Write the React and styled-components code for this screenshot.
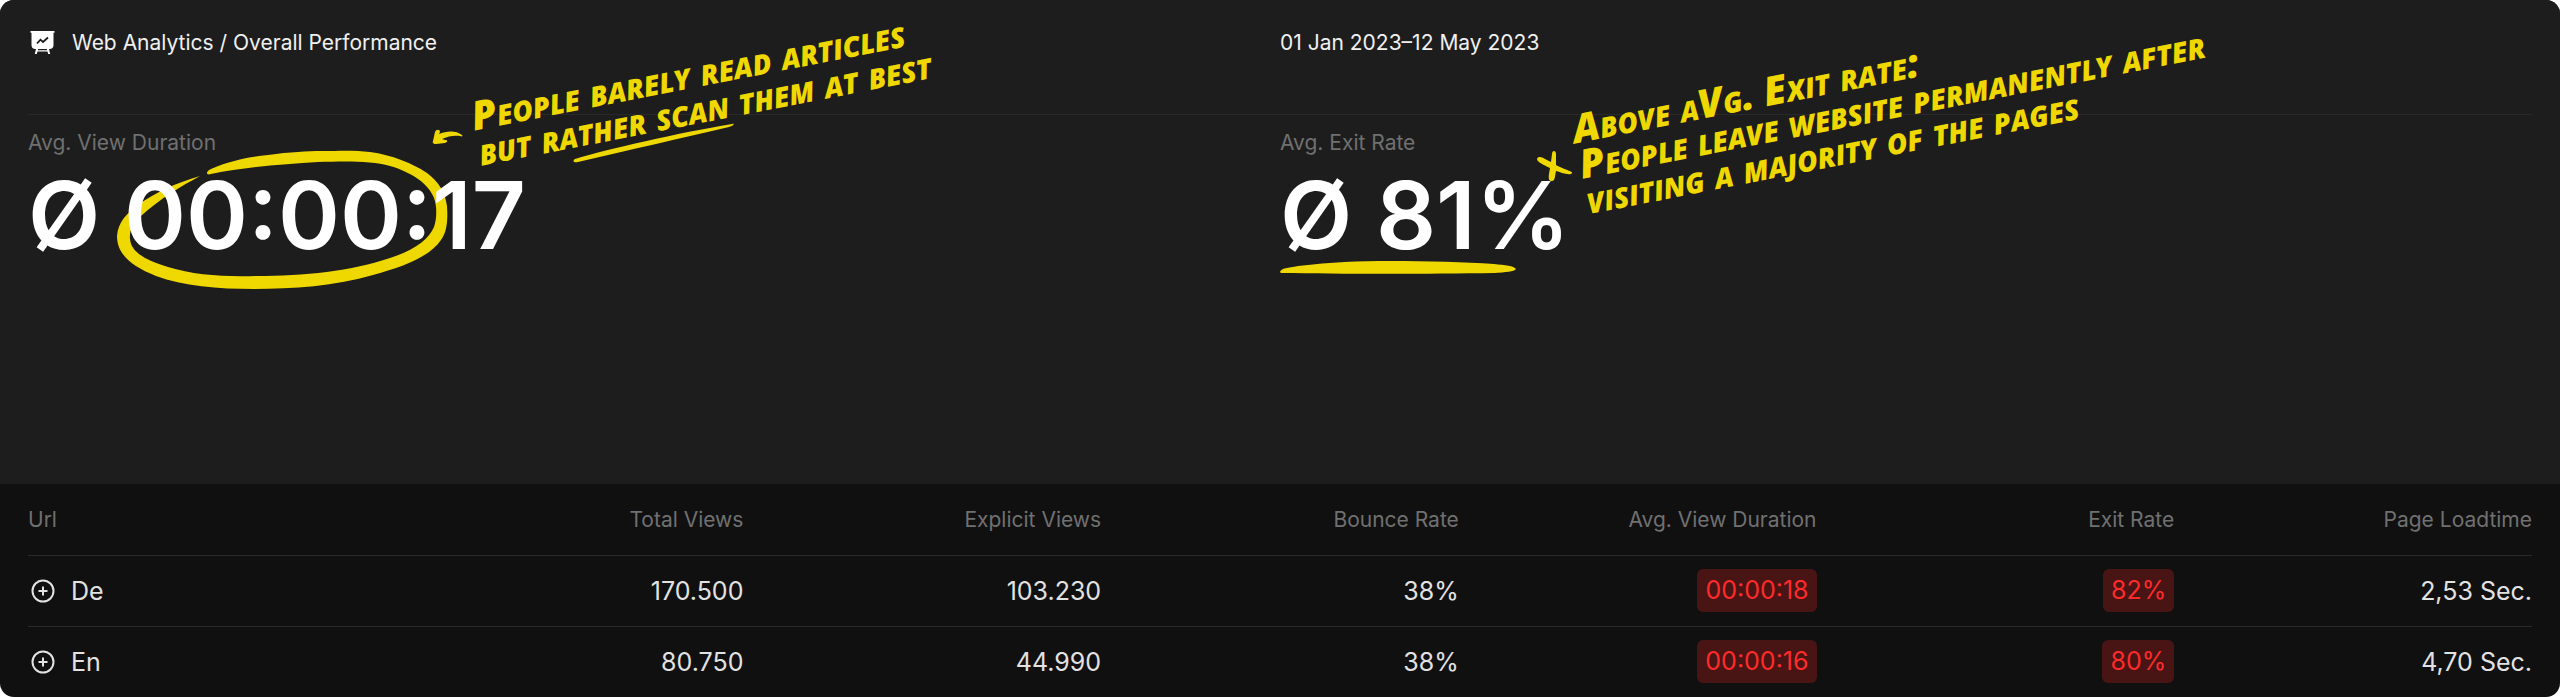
import React from 'react';
import styled, { createGlobalStyle } from 'styled-components';

const columns = ['Url', 'Total Views', 'Explicit Views', 'Bounce Rate', 'Avg. View Duration', 'Exit Rate', 'Page Loadtime'];

const rows = [
    { url: 'De', total: '170.500', explicit: '103.230', bounce: '38%', duration: '00:00:18', exit: '82%', load: '2,53 Sec.' },
    { url: 'En', total: '80.750', explicit: '44.990', bounce: '38%', duration: '00:00:16', exit: '80%', load: '4,70 Sec.' },
];

const BoardIcon = () => (
    <svg width="26" height="24" viewBox="0 0 26 24" aria-hidden="true">
        <path d="M.5 0h24v1.800h-1V14a4 4 0 0 1-4 4h-.5l1.200 5h-2l-.7-2.500H7.500L6.800 23h-2L6 18h-.5a4 4 0 0 1-4-4V1.800h-1zM8.200 18l-.3 1.200h9.200l-.3-1.200z" fill="#fff" />
        <path d="M7 12.500l3.500-3.800 2.500 2.300 5-4.500" fill="none" stroke="#1d1d1d" strokeWidth="1.800" />
    </svg>
);

const PlusIcon = () => (
    <svg width="24" height="24" viewBox="0 0 24 24" fill="none" stroke="#e2e2e2" strokeWidth="2" aria-hidden="true">
        <circle cx="12" cy="12" r="10.500" />
        <path d="M12 7.500v9M7.500 12h9" />
    </svg>
);

const App = () => {
    return (
        <Report>
            <GlobalStyle />
            <Overview>
                <TopBar>
                    <Title>
                        <BoardIcon />
                        Web Analytics / Overall Performance
                    </Title>
                    <Period>01 Jan 2023–12 May 2023</Period>
                </TopBar>
                <Metrics>
                    <Metric>
                        <Marker width="460" height="180" viewBox="0 0 460 180" aria-hidden="true">
                            <path d="M179 58C179 56 181 55 183 54C204 45 222 42 240 40C262 37 280 36 293 36C312 36 326 35 342 37C364 40 384 48 399 58C411 67 417 77 419 91C420 105 419 117 413 125C402 141 378 151 345 160C308 171 264 174 226 174C190 174 155 171 128 161C103 151 89 139 89 121C90 107 99 98 110 90C128 77 148 68 172 61C152 72 133 83 113 101C106 107 101 115 102 124C103 137 117 145 140 152C166 160 196 162 228 161C276 161 324 156 362 143C387 135 401 124 406 112C409 103 409 91 406 83C401 70 386 58 362 51C344 46 321 46 290 47C256 49 218 52 183 59C180 60 179 59 179 58Z" />
                        </Marker>
                        <Label>Avg. View Duration</Label>
                        <Value>Ø 00:00:17</Value>
                        <Marker $front width="800" height="180" viewBox="0 0 800 180" aria-hidden="true">
                            <path d="M434 20C428 15 418 16 411 19L412 17C412 14 408 14 407 17L405 26C404 29 406 29 408 29L417 28C420 27 420 25 417 25L414 24C420 21 427 20 432 21C434 22 435 21 434 20Z" />
                            <path d="M547 44C580 34 650 18 704 9C707 8 706 11 701 12C653 23 602 35 550 47C546 48 544 46 547 44Z" />
                        </Marker>
                        <Note $left={440} $top={-17}>
                            People barely read articles
                            <br />
                            but rather scan them at best
                        </Note>
                    </Metric>
                    <Metric>
                        <Marker width="300" height="180" viewBox="0 0 300 180" aria-hidden="true">
                            <path d="M0 157C1 153 8 153 18 151C52 147 78 146 110 146C148 146 185 147 214 149C225 150 234 151 236 154C234 157 226 157 214 158C150 159 60 159 1 158Z" />
                        </Marker>
                        <Label>Avg. Exit Rate</Label>
                        <Value>Ø 81%</Value>
                        <Marker $front width="320" height="180" viewBox="0 0 320 180" aria-hidden="true">
                            <path d="M257 44C258 41 262 42 265 44L271 47L272 39C272 35 276 35 276 39L276 50C285 55 296 57 291 59C286 60 280 57 276 56C275 61 275 66 272 66C267 67 269 59 270 53C264 50 257 47 257 44Z" />
                        </Marker>
                        <Note $left={289} $top={-4}>
                            Above aVg. Exit rate:
                            <br />
                            People leave website permanently after
                            <br />
                            visiting a majority of the pages
                        </Note>
                    </Metric>
                </Metrics>
            </Overview>
            <TableArea>
                <Table>
                    <thead>
                        <tr>
                            {columns.map((column) => (
                                <HeadCell key={column} scope="col">{column}</HeadCell>
                            ))}
                        </tr>
                    </thead>
                    <tbody>
                        {rows.map((row) => (
                            <tr key={row.url}>
                                <Cell>
                                    <UrlCell>
                                        <ExpandButton aria-label={`Expand ${row.url}`}>
                                            <PlusIcon />
                                        </ExpandButton>
                                        {row.url}
                                    </UrlCell>
                                </Cell>
                                <Cell>{row.total}</Cell>
                                <Cell>{row.explicit}</Cell>
                                <Cell>{row.bounce}</Cell>
                                <Cell><Alert>{row.duration}</Alert></Cell>
                                <Cell><Alert>{row.exit}</Alert></Cell>
                                <Cell>{row.load}</Cell>
                            </tr>
                        ))}
                    </tbody>
                </Table>
            </TableArea>
        </Report>
    );
};

export default App;

// Styled components
const GlobalStyle = createGlobalStyle`
    * {
        box-sizing: border-box;
    }

    body {
        margin: 0;
        background: #fff;
        font-family: Inter, sans-serif;
    }
`;

const Report = styled.main`
    overflow: hidden;
    border-radius: 14px;
    background: #101010;
`;

const Overview = styled.section`
    padding: 0 28px 215px;
    background: #1d1d1d;
`;

const TopBar = styled.header`
    display: grid;
    grid-template-columns: 1fr 1fr;
    padding: 29px 0 57px;
    border-bottom: 1px solid #292929;
    color: #f0f0f0;
    font-size: 21px;
    line-height: 28px;
`;

const Title = styled.h1`
    display: flex;
    align-items: center;
    gap: 16px;
    margin: 0;
    padding-left: 2px;
    font-size: 21px;
    font-weight: 400;
`;

const Period = styled.div`
    font-size: 21px;
`;

const Metrics = styled.div`
    display: grid;
    grid-template-columns: 1fr 1fr;
`;

const Metric = styled.div`
    position: relative;
    padding-top: 14px;
`;

const Label = styled.div`
    color: #707070;
    font-size: 21px;
    line-height: 28px;
`;

const Value = styled.div`
    position: relative;
    padding-top: 4px;
    color: #fff;
    font-size: 94px;
    font-weight: 600;
    line-height: 108px;
    white-space: nowrap;
`;

// hand-drawn strokes, drawn behind the value unless $front is set
const Marker = styled.svg`
    position: absolute;
    top: 0;
    left: 0;
    z-index: ${({ $front }) => ($front ? 1 : 0)};
    overflow: visible;
    fill: #efd700;
    pointer-events: none;
`;

const Note = styled.p`
    position: absolute;
    top: ${({ $top }) => $top}px;
    left: ${({ $left }) => $left}px;
    z-index: 1;
    margin: 0;
    color: #efd700;
    font-family: 'Open Sans', sans-serif;
    font-size: 40px;
    font-style: italic;
    font-weight: 800;
    font-variant: small-caps;
    line-height: 36px;
    white-space: nowrap;
    transform: rotate(-11deg);
    transform-origin: left top;
`;

const TableArea = styled.section`
    padding: 0 28px;
`;

const Table = styled.table`
    width: 100%;
    border-collapse: collapse;
    table-layout: fixed;
`;

const HeadCell = styled.th`
    height: 71px;
    padding: 0;
    color: #707070;
    font-size: 21px;
    font-weight: 400;
    text-align: right;

    &:first-child {
        text-align: left;
    }
`;

const Cell = styled.td`
    height: 71px;
    padding: 0;
    border-top: 1px solid #292929;
    color: #e2e2e2;
    font-size: 25px;
    text-align: right;
`;

const UrlCell = styled.div`
    display: flex;
    align-items: center;
    gap: 16px;
    padding-left: 3px;
`;

const ExpandButton = styled.button`
    display: flex;
    padding: 0;
    border: 0;
    background: none;
    cursor: pointer;
`;

const Alert = styled.span`
    display: inline-block;
    padding: 0 8px;
    border-radius: 6px;
    background: #481414;
    color: #ff2a2a;
    line-height: 43px;
    vertical-align: middle;
`;
